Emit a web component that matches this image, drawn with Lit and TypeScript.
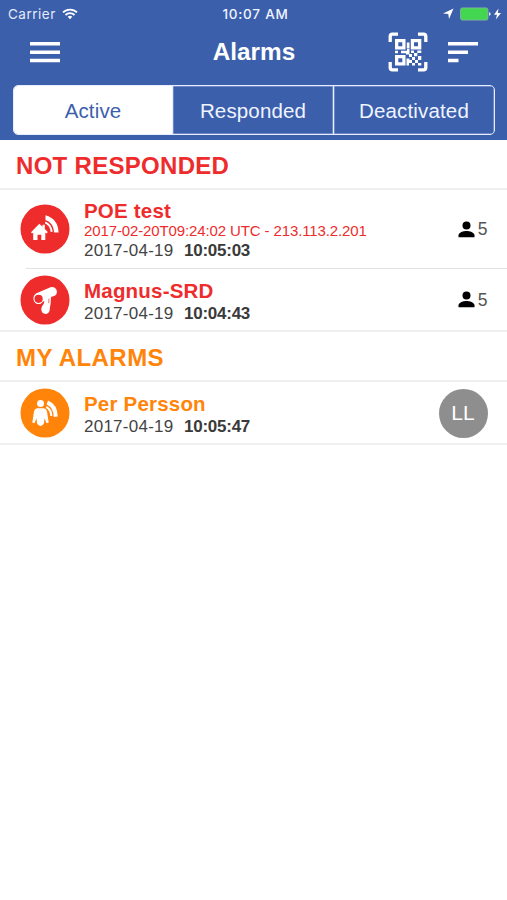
import { LitElement, html, svg, css, nothing } from "lit";
import { customElement, property } from "lit/decorators.js";

interface Alarm {
  kind: "house" | "camera" | "person";
  name: string;
  detail?: string;
  date: string;
  time: string;
  responders?: number;
  initials?: string;
}

const glyphs = {
  house: svg`
    <path fill="#fff" d="M11 28.300 19.300 19.800l3.200 3v-2h2.300v4.200l3 3.100-1.300 1.300-1.200-.8v7.400h-4v-5.200h-3.800v5.200h-4.300v-7.400l-1.100.9z"/>
    <path fill="#fff" d="M25.500 11.200q12.600 3.500 13.100 17.400h-4.400q-.7-9.700-8.700-12.600z"/>
    <path fill="none" stroke="#fff" stroke-width="2" d="M25.200 18.300q5.800 2.500 6.500 9.500"/>`,
  camera: svg`
    <path fill="#fff" d="M17 18 30.500 12.200q4.500-1.200 6 2.500 1.300 4-1.700 6l-3.800 1.300q-.1 3.500-.4 6.500-.2 1.800-.6 3.500l-.4 3.500q-1 3.500-4.200 3.400-3.300-.3-4-3.400-.6-3.500 2.300-6.500l.6-3-1.200.4q-2.500 3.500-6.200 2.500a6 6 0 0 1 0-10.900z"/>
    <circle cx="18.600" cy="23.800" r="4.100" fill="#ee2c2c"/>
    <path d="m29 23.600-.3 4.500" stroke="#ee2c2c" stroke-width=".7"/>`,
  person: svg`
    <circle cx="20.500" cy="15.500" r="3.500" fill="#fff"/>
    <path fill="#fff" d="M17 20.300h7q2.400.5 3 3.300l1.700 11-2.200.6-2-5-.5 5q-1.300 2.900-3.500 2.900t-3.500-2.900l-.5-5-2 5-2.200-.6 1.700-11q.6-2.800 3-3.300z"/>
    <path fill="#fff" d="M28 12.500q9.600 4 9.700 16l-4 .6q-.1-9.200-7-12.500z"/>
    <path fill="none" stroke="#fff" stroke-width="2" d="M26.300 19q4.800 2.500 5 9"/>`,
};

@customElement("alarm-row")
export class AlarmRow extends LitElement {
  @property({ attribute: false }) alarm!: Alarm;

  static styles = css`
    :host { display: flex; align-items: center; box-sizing: border-box; padding: 0 19.500px 0 20px; color: #ee2c2c; }
    .badge { width: 50px; height: 50px; flex: none; }
    .info { margin-left: 14px; padding-top: 6px; flex: 1; white-space: nowrap; }
    :host(.tall) .info { padding-top: 4px; }
    .name { font-weight: 700; font-size: 20.500px; line-height: 22px; letter-spacing: .2px; }
    .detail { font-size: 15px; line-height: 17px; letter-spacing: -.12px; }
    .when { display: flex; color: #444; font-size: 17px; line-height: 23px; }
    .date { width: 100px; letter-spacing: .25px; }
    .time { font-weight: 700; color: #3a3a3a; letter-spacing: -.25px; }
    .count { display: flex; align-items: center; font-size: 17.500px; color: #555; gap: 3px; line-height: 20px; }
    .initials { width: 49px; height: 49px; border-radius: 50%; background: #8e8e8e; color: #fff;
      display: flex; align-items: center; justify-content: center; font-size: 21px; box-sizing: border-box;
      margin-top: 1px; }
  `;

  render() {
    const a = this.alarm;
    return html`
      <svg class="badge" viewBox="0 0 50 50">
        <circle cx="25" cy="25" r="24.500" fill=${a.kind === "person" ? "#ff8409" : "#ee2c2c"} />
        ${glyphs[a.kind]}
      </svg>
      <div class="info">
        <div class="name">${a.name}</div>
        ${a.detail ? html`<div class="detail">${a.detail}</div>` : nothing}
        <div class="when"><span class="date">${a.date}</span><span class="time">${a.time}</span></div>
      </div>
      ${a.initials
        ? html`<div class="initials">${a.initials}</div>`
        : html`<div class="count">
            <svg width="17" height="17" viewBox="0 0 17 17">
              <circle cx="8.500" cy="4.500" r="4" /><path d="M.5 16.300V14.200C.5 11.500 5.600 10 8.500 10s8 1.500 8 4.200v2.100z" />
            </svg>${a.responders}
          </div>`}
    `;
  }
}

@customElement("app-root")
export class AppRoot extends LitElement {
  static styles = css`
    :host { display: block; width: 507px; height: 900px; overflow: hidden; background: #fff;
      font-family: "Liberation Sans", Arial, sans-serif; }
    header { height: 140px; background: #3c5fac; color: #fff; box-sizing: border-box; }
    .status { display: grid; grid-template-columns: 1fr auto 1fr; align-items: center; height: 27px;
      padding: 0 5px 0 8px; font: 500 13.500px/27px Inter, sans-serif; box-sizing: border-box; }
    .carrier { display: flex; align-items: center; gap: 6px; font-weight: 400; letter-spacing: .5px; color: #e4eaf8; }
    .carrier svg { margin-top: -1px; }
    .clock { letter-spacing: .75px; color: #f0f4ff; padding: 1px 0 0 1px; }
    .power { display: flex; justify-content: flex-end; }
    .nav { display: flex; align-items: center; height: 50px; padding: 0 29px 0 30px; }
    .side { flex: 1; display: flex; align-items: center; }
    .right { justify-content: flex-end; gap: 20px; }
    h1 { margin: 0; font-size: 24.300px; line-height: 30px; }
    .tabs { display: grid; grid-template-columns: 158px 161px 1fr; height: 50px; margin: 8px 12px 0 13px;
      border: 1px solid #e6edff; border-radius: 5px; box-sizing: border-box; overflow: hidden; }
    .tab { display: flex; align-items: center; justify-content: center; padding-top: 2px; font-size: 20.500px;
      color: #eff4ff; letter-spacing: .15px; box-shadow: inset 0 0 0 .5px #9fb2de; }
    .tab + .tab { border-left: 1px solid #e6edff; }
    .tabs .on { background: #fff; color: #3c5fac; box-shadow: none; }
    h2 { margin: 0; padding: 1px 16px 0; height: 50px; line-height: 50px; font-size: 24px; letter-spacing: .3px;
      color: #ee2c2c; border-bottom: 2px solid #efeff0; box-sizing: border-box; }
    .mine { color: #ff8409; letter-spacing: .45px; }
    .tall { height: 78px; }
    .split { height: 1px; margin-left: 26px; background: #e2e2e4; }
    .short { height: 63px; border-bottom: 2px solid #efeff0; }
    .orange { color: #ff8409; }
  `;

  render() {
    return html`
      <header>
        <div class="status">
          <div class="carrier">Carrier
            <svg width="16" height="12" viewBox="0 0 16 12" fill="none" stroke="#fff" stroke-width="1.800">
              <path d="M1 4.400a10 10 0 0 1 14 0M3.500 7a6.400 6.400 0 0 1 9 0" />
              <path d="m8 11.300-2.300-2.500a3.300 3.300 0 0 1 4.600 0z" fill="#fff" stroke="none" />
            </svg>
          </div>
          <div class="clock">10:07 AM</div>
          <div class="power">
            <svg width="60" height="14" viewBox="0 0 60 14">
              <path d="M1 6.500 11.500 1.500 7 12 6.300 6.900z" fill="#fff" />
              <rect x="18.500" y=".9" width="27.500" height="12.200" rx="2" fill="#42d651" stroke="#8db5a5" stroke-width=".8" />
              <path d="M47 5.200q1.700.3 1.700 1.800T47 8.800z" fill="#dce6ff" />
              <path d="M56.500 1.500 52 7.700h3l-1.200 4.800L59 6h-3.200z" fill="#fff" />
            </svg>
          </div>
        </div>
        <div class="nav">
          <div class="side">
            <svg width="30" height="21" viewBox="0 0 30 21" fill="#fff">
              <path d="M0 0h30v3.500H0zM0 8.400h30v3.500H0zM0 16.700h30v3.500H0z" />
            </svg>
          </div>
          <h1>Alarms</h1>
          <div class="side right">
            <svg width="40" height="40" viewBox="0 0 40 40">
              <path d="M2.200 10V4.500q0-2.300 2.300-2.300H10M30 2.200h5.500q2.300 0 2.300 2.300V10M37.800 30v5.500q0 2.300-2.300 2.300H30M10 37.800H4.500q-2.300 0-2.300-2.300V30" fill="none" stroke="#fff" stroke-width="3.300" />
              <path fill="#fff" fill-rule="evenodd" d="M7 7h10.500v10.500H7zM10.300 10.300v4h4v-4zM22.800 7h10.500v10.500H22.800zM26 10.300v4h4v-4zM7 23h10.500v10.500H7zM10.300 26.300v4h4v-4z" />
              <path fill="#fff" d="M18.800 10.500h2.700v6h-2.700zM7 18.800h3v2.500H7zM13 18.800h6V17h2.500v5H24v3h-3v-2.500h-3v-1.200h-5zM23 18.500h3V21h-3zM26 21h3.300v3.300H26zM29.300 18.500h4V21h-4zM30 24h3.300v4H30zM24 25h3v3h-3zM27 28h3v3h-3zM30 31h3.300v2.500H30zM18.500 26.500h3V28H24v3h-3v2.500h-2.500zM24 31h3v2.500h-3z" />
            </svg>
            <svg width="30" height="21" viewBox="0 0 30 21" fill="#fff">
              <path d="M0 0h30v3.500H0zM0 8.400h20v3.500H0zM0 16.700h10.500v3.500H0z" />
            </svg>
          </div>
        </div>
        <div class="tabs">
          <div class="tab on">Active</div>
          <div class="tab">Responded</div>
          <div class="tab">Deactivated</div>
        </div>
      </header>
      <h2>NOT RESPONDED</h2>
      <alarm-row class="tall" .alarm=${{
        kind: "house", name: "POE test", detail: "2017-02-20T09:24:02 UTC - 213.113.2.201",
        date: "2017-04-19", time: "10:05:03", responders: 5,
      }}></alarm-row>
      <div class="split"></div>
      <alarm-row class="short" .alarm=${{
        kind: "camera", name: "Magnus-SRD", date: "2017-04-19", time: "10:04:43", responders: 5,
      }}></alarm-row>
      <h2 class="mine">MY ALARMS</h2>
      <alarm-row class="short orange" .alarm=${{
        kind: "person", name: "Per Persson", date: "2017-04-19", time: "10:05:47", initials: "LL",
      }}></alarm-row>
    `;
  }
}
